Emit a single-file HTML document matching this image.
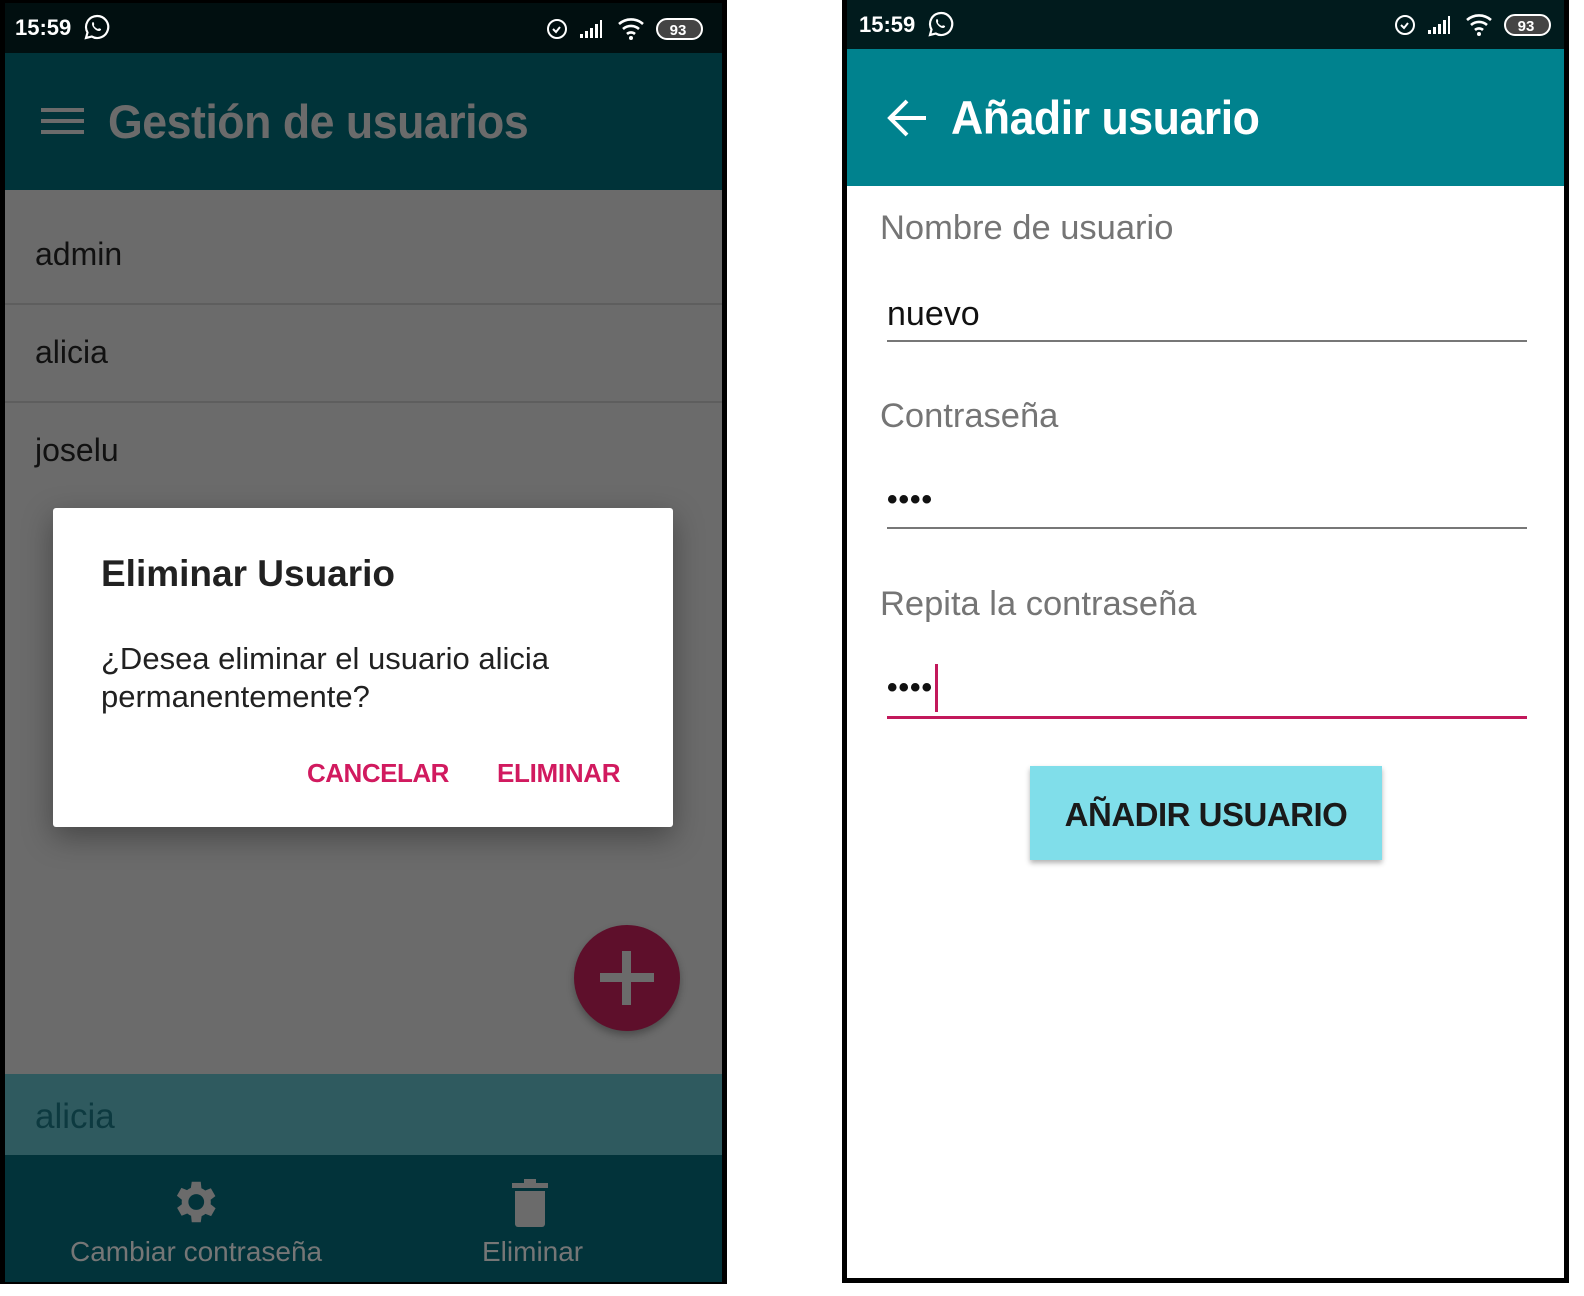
<!DOCTYPE html>
<html><head><meta charset="utf-8"><style>
*{margin:0;padding:0;box-sizing:border-box}
body{width:1584px;height:1296px;background:#fff;position:relative;overflow:hidden;font-family:"Liberation Sans",sans-serif}
.a{position:absolute}
.t{position:absolute;white-space:nowrap;line-height:1}
</style></head><body>
<!-- LEFT PHONE -->
<div class="a" style="left:0;top:0;width:727px;height:1284px;background:#000"></div>
<div class="a" style="left:5px;top:3px;width:717px;height:50px;background:#010f10"></div>
<div class="t" style="left:15px;top:17px;font-size:22px;font-weight:bold;color:#fff">15:59</div>
<svg class="a" style="left:84px;top:14px" width="26" height="26" viewBox="0 0 26 26"><path d="M13 2a11 11 0 0 0-9.5 16.5L2 24l5.7-1.5A11 11 0 1 0 13 2z" fill="none" stroke="#fff" stroke-width="2.2"/><path d="M9 8c1 0 1.5 2.5 1 3s1 3 4 4c.8-.6 1.3-1 3 0 .5 1-1 2-2 2-3 0-7-4-7-7 0-1 .5-2 1-2z" fill="#fff"/></svg>
<svg class="a" style="left:545px;top:14px" width="160" height="28" viewBox="0 0 160 28"><circle cx="12" cy="15" r="9" fill="none" stroke="#fff" stroke-width="2"/><path d="M8 15l3 3 4-5" fill="none" stroke="#fff" stroke-width="2"/><path d="M35 24h3v-4h-3zM40 24h3v-7h-3zM45 24h3v-10h-3zM50 24h3v-14h-3zM55 24h2v-18h-2z" fill="#fff"/><path d="M74 10a18 18 0 0 1 24 0M78 15a12 12 0 0 1 16 0M82 20a6 6 0 0 1 8 0" fill="none" stroke="#fff" stroke-width="2.6"/><circle cx="86" cy="24" r="2" fill="#fff"/><rect x="112" y="5" width="45" height="20" rx="10" fill="#444" stroke="#fff" stroke-width="2"/><text x="133" y="21" font-size="15" font-weight="bold" fill="#fff" text-anchor="middle" font-family="Liberation Sans">93</text></svg>
<div class="a" style="left:5px;top:53px;width:717px;height:137px;background:#003339"></div>
<div class="a" style="left:41px;top:108px;width:43px;height:4px;background:#6b6b6b;box-shadow:0 11px 0 #6b6b6b,0 22px 0 #6b6b6b"></div>
<div class="t" style="left:108px;top:98px;font-size:47px;color:#6b6b6b;font-weight:bold;letter-spacing:-0.5px;transform:scaleX(0.95);transform-origin:left">Gestión de usuarios</div>
<div class="a" style="left:5px;top:190px;width:717px;height:884px;background:#6b6b6b"></div>
<div class="a" style="left:5px;top:303px;width:717px;height:2px;background:#5e5e5e"></div>
<div class="a" style="left:5px;top:401px;width:717px;height:2px;background:#5e5e5e"></div>
<div class="t" style="left:35px;top:238px;font-size:32px;color:#111">admin</div>
<div class="t" style="left:35px;top:336px;font-size:32px;color:#111">alicia</div>
<div class="t" style="left:35px;top:434px;font-size:32px;color:#111">joselu</div>
<div class="a" style="left:53px;top:508px;width:620px;height:319px;background:#fff;border-radius:3px;box-shadow:0 10px 30px rgba(0,0,0,.35)"></div>
<div class="t" style="left:101px;top:555px;font-size:37px;color:#212121;font-weight:bold">Eliminar Usuario</div>
<div class="t" style="left:101px;top:640px;font-size:31px;color:#212121;line-height:38px">¿Desea eliminar el usuario alicia<br>permanentemente?</div>
<div class="t" style="left:307px;top:760px;font-size:26px;color:#d11a5f;font-weight:bold;letter-spacing:-0.5px">CANCELAR</div>
<div class="t" style="left:497px;top:760px;font-size:26px;color:#d11a5f;font-weight:bold;letter-spacing:-0.3px">ELIMINAR</div>
<div class="a" style="left:574px;top:925px;width:106px;height:106px;border-radius:50%;background:#5e0f2b;box-shadow:0 4px 8px rgba(0,0,0,.3)"></div>
<div class="a" style="left:600px;top:973px;width:54px;height:9px;background:#6b6b6b"></div>
<div class="a" style="left:622px;top:951px;width:9px;height:54px;background:#6b6b6b"></div>
<div class="a" style="left:5px;top:1074px;width:717px;height:81px;background:#2f5a5f"></div>
<div class="t" style="left:35px;top:1099px;font-size:35px;color:#0d3a40">alicia</div>
<div class="a" style="left:5px;top:1155px;width:717px;height:127px;background:#02333a"></div>
<svg class="a" style="left:167px;top:1175px" width="54" height="54" viewBox="0 0 24 24"><path fill="#6b6b6b" d="M19.4 13a7.5 7.5 0 0 0 0-2l2.1-1.6-2-3.5-2.5 1a7 7 0 0 0-1.7-1L15 3h-4l-.4 2.7a7 7 0 0 0-1.7 1l-2.5-1-2 3.5L6.6 11a7.5 7.5 0 0 0 0 2l-2.1 1.6 2 3.5 2.5-1a7 7 0 0 0 1.7 1L11 21h4l.4-2.7a7 7 0 0 0 1.7-1l2.5 1 2-3.5zM13 15.5a3.5 3.5 0 1 1 0-7 3.5 3.5 0 0 1 0 7z"/></svg>
<div class="t" style="left:70px;top:1238px;font-size:28px;color:#767676">Cambiar contraseña</div>
<svg class="a" style="left:510px;top:1178px" width="40" height="50" viewBox="0 0 40 50"><rect x="2" y="5" width="36" height="5" fill="#6b6b6b"/><rect x="14" y="1" width="12" height="5" fill="#6b6b6b"/><path d="M5 13h30v33a3 3 0 0 1-3 3H8a3 3 0 0 1-3-3z" fill="#6b6b6b"/></svg>
<div class="t" style="left:482px;top:1238px;font-size:28px;color:#767676">Eliminar</div>

<!-- RIGHT PHONE -->
<div class="a" style="left:842px;top:0;width:727px;height:1283px;background:#000"></div>
<div class="a" style="left:847px;top:0;width:717px;height:1278px;background:#fff"></div>
<div class="a" style="left:847px;top:0;width:717px;height:49px;background:#011b1d"></div>
<div class="t" style="left:859px;top:14px;font-size:22px;font-weight:bold;color:#fff">15:59</div>
<svg class="a" style="left:928px;top:11px" width="26" height="26" viewBox="0 0 26 26"><path d="M13 2a11 11 0 0 0-9.5 16.5L2 24l5.7-1.5A11 11 0 1 0 13 2z" fill="none" stroke="#fff" stroke-width="2.2"/><path d="M9 8c1 0 1.5 2.5 1 3s1 3 4 4c.8-.6 1.3-1 3 0 .5 1-1 2-2 2-3 0-7-4-7-7 0-1 .5-2 1-2z" fill="#fff"/></svg>
<svg class="a" style="left:1393px;top:10px" width="160" height="28" viewBox="0 0 160 28"><circle cx="12" cy="15" r="9" fill="none" stroke="#fff" stroke-width="2"/><path d="M8 15l3 3 4-5" fill="none" stroke="#fff" stroke-width="2"/><path d="M35 24h3v-4h-3zM40 24h3v-7h-3zM45 24h3v-10h-3zM50 24h3v-14h-3zM55 24h2v-18h-2z" fill="#fff"/><path d="M74 10a18 18 0 0 1 24 0M78 15a12 12 0 0 1 16 0M82 20a6 6 0 0 1 8 0" fill="none" stroke="#fff" stroke-width="2.6"/><circle cx="86" cy="24" r="2" fill="#fff"/><rect x="112" y="5" width="45" height="20" rx="10" fill="#444" stroke="#fff" stroke-width="2"/><text x="133" y="21" font-size="15" font-weight="bold" fill="#fff" text-anchor="middle" font-family="Liberation Sans">93</text></svg>
<div class="a" style="left:847px;top:49px;width:717px;height:137px;background:#00828e"></div>
<svg class="a" style="left:886px;top:98px" width="42" height="40" viewBox="0 0 42 40"><path d="M40 20H5M21 3L4 20l17 17" fill="none" stroke="#fff" stroke-width="4"/></svg>
<div class="t" style="left:951px;top:94px;font-size:47px;color:#fff;font-weight:bold;letter-spacing:-0.5px;transform:scaleX(0.95);transform-origin:left">Añadir usuario</div>
<div class="t" style="left:880px;top:211px;font-size:34.5px;color:#757575">Nombre de usuario</div>
<div class="t" style="left:887px;top:297px;font-size:34px;color:#111">nuevo</div>
<div class="a" style="left:887px;top:340px;width:640px;height:2px;background:#777"></div>
<div class="t" style="left:880px;top:399px;font-size:34.5px;color:#757575">Contraseña</div>
<div class="t" style="left:887px;top:485px;font-size:30px;color:#111;font-weight:bold;letter-spacing:1px">••••</div>
<div class="a" style="left:887px;top:527px;width:640px;height:2px;background:#777"></div>
<div class="t" style="left:880px;top:587px;font-size:34.5px;color:#757575">Repita la contraseña</div>
<div class="t" style="left:887px;top:673px;font-size:30px;color:#111;font-weight:bold;letter-spacing:1px">••••</div>
<div class="a" style="left:935px;top:664px;width:3px;height:48px;background:#c2185b"></div>
<div class="a" style="left:887px;top:716px;width:640px;height:3px;background:#c2185b"></div>
<div class="a" style="left:1030px;top:766px;width:352px;height:94px;background:#80deea;box-shadow:0 3px 5px rgba(0,0,0,.3)"></div>
<div class="t" style="left:1030px;top:798px;width:352px;text-align:center;font-size:33px;color:#1a1a1a;font-weight:bold;letter-spacing:-0.5px">AÑADIR USUARIO</div>
</body></html>
